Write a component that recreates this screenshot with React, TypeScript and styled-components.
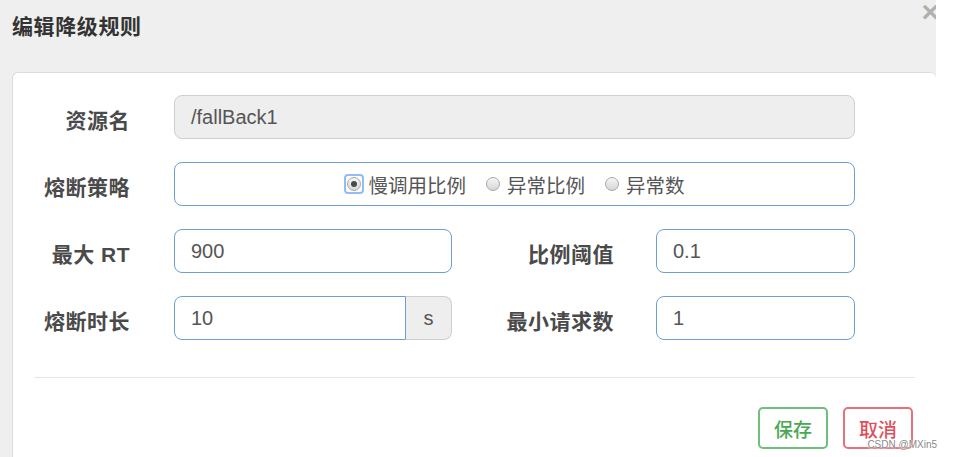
import React from 'react';
import styled, { createGlobalStyle } from 'styled-components';

const Global = createGlobalStyle`
  html, body { margin: 0; padding: 0; background: #fff; }
  body { font-family: "Liberation Sans", "Noto Sans CJK SC", sans-serif; }
  * { box-sizing: border-box; }
`;

const Page = styled.div`
  position: relative;
  width: 953px;
  height: 457px;
  display: flex;
  background: #fff;
  overflow: hidden;
`;

const Modal = styled.div`
  width: 936px;
  height: 457px;
  background: #efefef;
  display: flex;
  flex-direction: column;
  overflow: hidden;
`;

const Header = styled.div`
  height: 72px;
  flex: none;
  display: flex;
  justify-content: space-between;
  align-items: flex-start;
  padding-left: 12px;
`;

const Title = styled.h4`
  margin: 15px 0 0;
  font-size: 21px;
  letter-spacing: 0.6px;
  line-height: 24px;
  font-weight: 700;
  color: #333;
`;

const Close = styled.span`
  font-family: "Liberation Sans", sans-serif;
  font-size: 30px;
  font-weight: 700;
  color: #b0b0b0;
  line-height: 24px;
  margin-right: -3px;
`;

const Card = styled.div`
  flex: 1;
  margin-left: 12px;
  background: #fff;
  border: 1px solid #dcdcdc;
  border-right: none;
  border-bottom: none;
  border-radius: 6px 6px 0 0;
  padding: 22px 21px 0 0;
`;

const Row = styled.div<{ $last?: boolean }>`
  display: flex;
  align-items: center;
  height: 44px;
  margin-bottom: ${p => (p.$last ? 0 : 23)}px;
`;

const Label = styled.label<{ $w: number; $gap: number }>`
  flex: none;
  width: ${p => p.$w}px;
  margin-right: ${p => p.$gap}px;
  text-align: right;
  font-size: 21px;
  letter-spacing: 0.5px;
  font-weight: 700;
  color: #4a4a4a;
  padding-top: 4px;
  white-space: nowrap;
`;

const Input = styled.div<{ $w: number; $readonly?: boolean; $group?: boolean }>`
  flex: none;
  width: ${p => p.$w}px;
  height: 44px;
  display: flex;
  align-items: center;
  padding-left: 16px;
  font-size: 20px;
  color: #555;
  background: ${p => (p.$readonly ? '#eee' : '#fff')};
  border: 1px solid ${p => (p.$readonly ? '#cfcfcf' : '#6d9fd5')};
  border-radius: ${p => (p.$group ? '8px 0 0 8px' : '8px')};
`;

const InputGroup = styled.div`
  flex: none;
  display: flex;
  width: 278px;
`;

const Addon = styled.div`
  width: 46px;
  height: 44px;
  display: flex;
  align-items: center;
  justify-content: center;
  background: #eee;
  border: 1px solid #cfcfcf;
  border-left: none;
  border-radius: 0 8px 8px 0;
  font-size: 20px;
  color: #555;
`;

const RadioBox = styled.div`
  flex: none;
  width: 681px;
  height: 44px;
  display: flex;
  align-items: center;
  justify-content: center;
  gap: 17px;
  border: 1px solid #6d9fd5;
  border-radius: 8px;
`;

const RadioOption = styled.label`
  display: flex;
  align-items: center;
  gap: 4px;
  font-size: 19.5px;
  color: #555;
`;

const RadioRing = styled.span<{ $focus?: boolean }>`
  width: 20px;
  height: 20px;
  display: flex;
  align-items: center;
  justify-content: center;
  border-radius: 4px;
  border: 2px solid ${p => (p.$focus ? '#93bdf2' : 'transparent')};
`;

const RadioDot = styled.span<{ $checked?: boolean }>`
  width: 14px;
  height: 14px;
  border-radius: 50%;
  border: 1px solid #a8a8a8;
  background: linear-gradient(#f6f6f6, #d6d6d6);
  display: flex;
  align-items: center;
  justify-content: center;
  &::after {
    content: '';
    width: 6px;
    height: 6px;
    border-radius: 50%;
    background: ${p => (p.$checked ? '#4a4a4a' : 'transparent')};
  }
`;

const Divider = styled.div`
  height: 1px;
  background: #e5e5e5;
  margin: 37px 0 0 21px;
`;

const Footer = styled.div`
  display: flex;
  justify-content: flex-end;
  gap: 15px;
  margin-top: 29px;
  padding-right: 2px;
`;

const Button = styled.button<{ $tone: 'green' | 'red' }>`
  width: 70px;
  height: 42px;
  background: #fff;
  border: 2px solid ${p => (p.$tone === 'green' ? '#6cc27c' : '#ea6f79')};
  border-radius: 5px;
  color: ${p => (p.$tone === 'green' ? '#47a952' : '#e0505b')};
  font-family: "Liberation Sans", "Noto Sans CJK SC", sans-serif;
  font-size: 19px;
  font-weight: 500;
  padding: 0;
`;

const Watermark = styled.span`
  position: absolute;
  right: 16px;
  bottom: 7px;
  font-size: 10px;
  color: #8a8a8a;
  text-shadow: 0 0 2px #fff, 0 0 2px #fff;
`;

const options = [
  { text: '慢调用比例', checked: true },
  { text: '异常比例', checked: false },
  { text: '异常数', checked: false },
];

export default function App() {
  return (
    <>
      <Global />
      <Page>
        <Modal>
          <Header>
            <Title>编辑降级规则</Title>
            <Close>×</Close>
          </Header>
          <Card>
            <Row>
              <Label $w={117} $gap={44}>资源名</Label>
              <Input $w={681} $readonly>/fallBack1</Input>
            </Row>
            <Row>
              <Label $w={117} $gap={44}>熔断策略</Label>
              <RadioBox>
                {options.map(o => (
                  <RadioOption key={o.text}>
                    <RadioRing $focus={o.checked}>
                      <RadioDot $checked={o.checked} />
                    </RadioRing>
                    {o.text}
                  </RadioOption>
                ))}
              </RadioBox>
            </Row>
            <Row>
              <Label $w={117} $gap={44}>最大 RT</Label>
              <Input $w={278}>900</Input>
              <Label $w={162} $gap={42}>比例阈值</Label>
              <Input $w={199}>0.1</Input>
            </Row>
            <Row $last>
              <Label $w={117} $gap={44}>熔断时长</Label>
              <InputGroup>
                <Input $w={232} $group>10</Input>
                <Addon>s</Addon>
              </InputGroup>
              <Label $w={162} $gap={42}>最小请求数</Label>
              <Input $w={199}>1</Input>
            </Row>
            <Divider />
            <Footer>
              <Button $tone="green">保存</Button>
              <Button $tone="red">取消</Button>
            </Footer>
          </Card>
        </Modal>
        <Watermark>CSDN @MXin5</Watermark>
      </Page>
    </>
  );
}
